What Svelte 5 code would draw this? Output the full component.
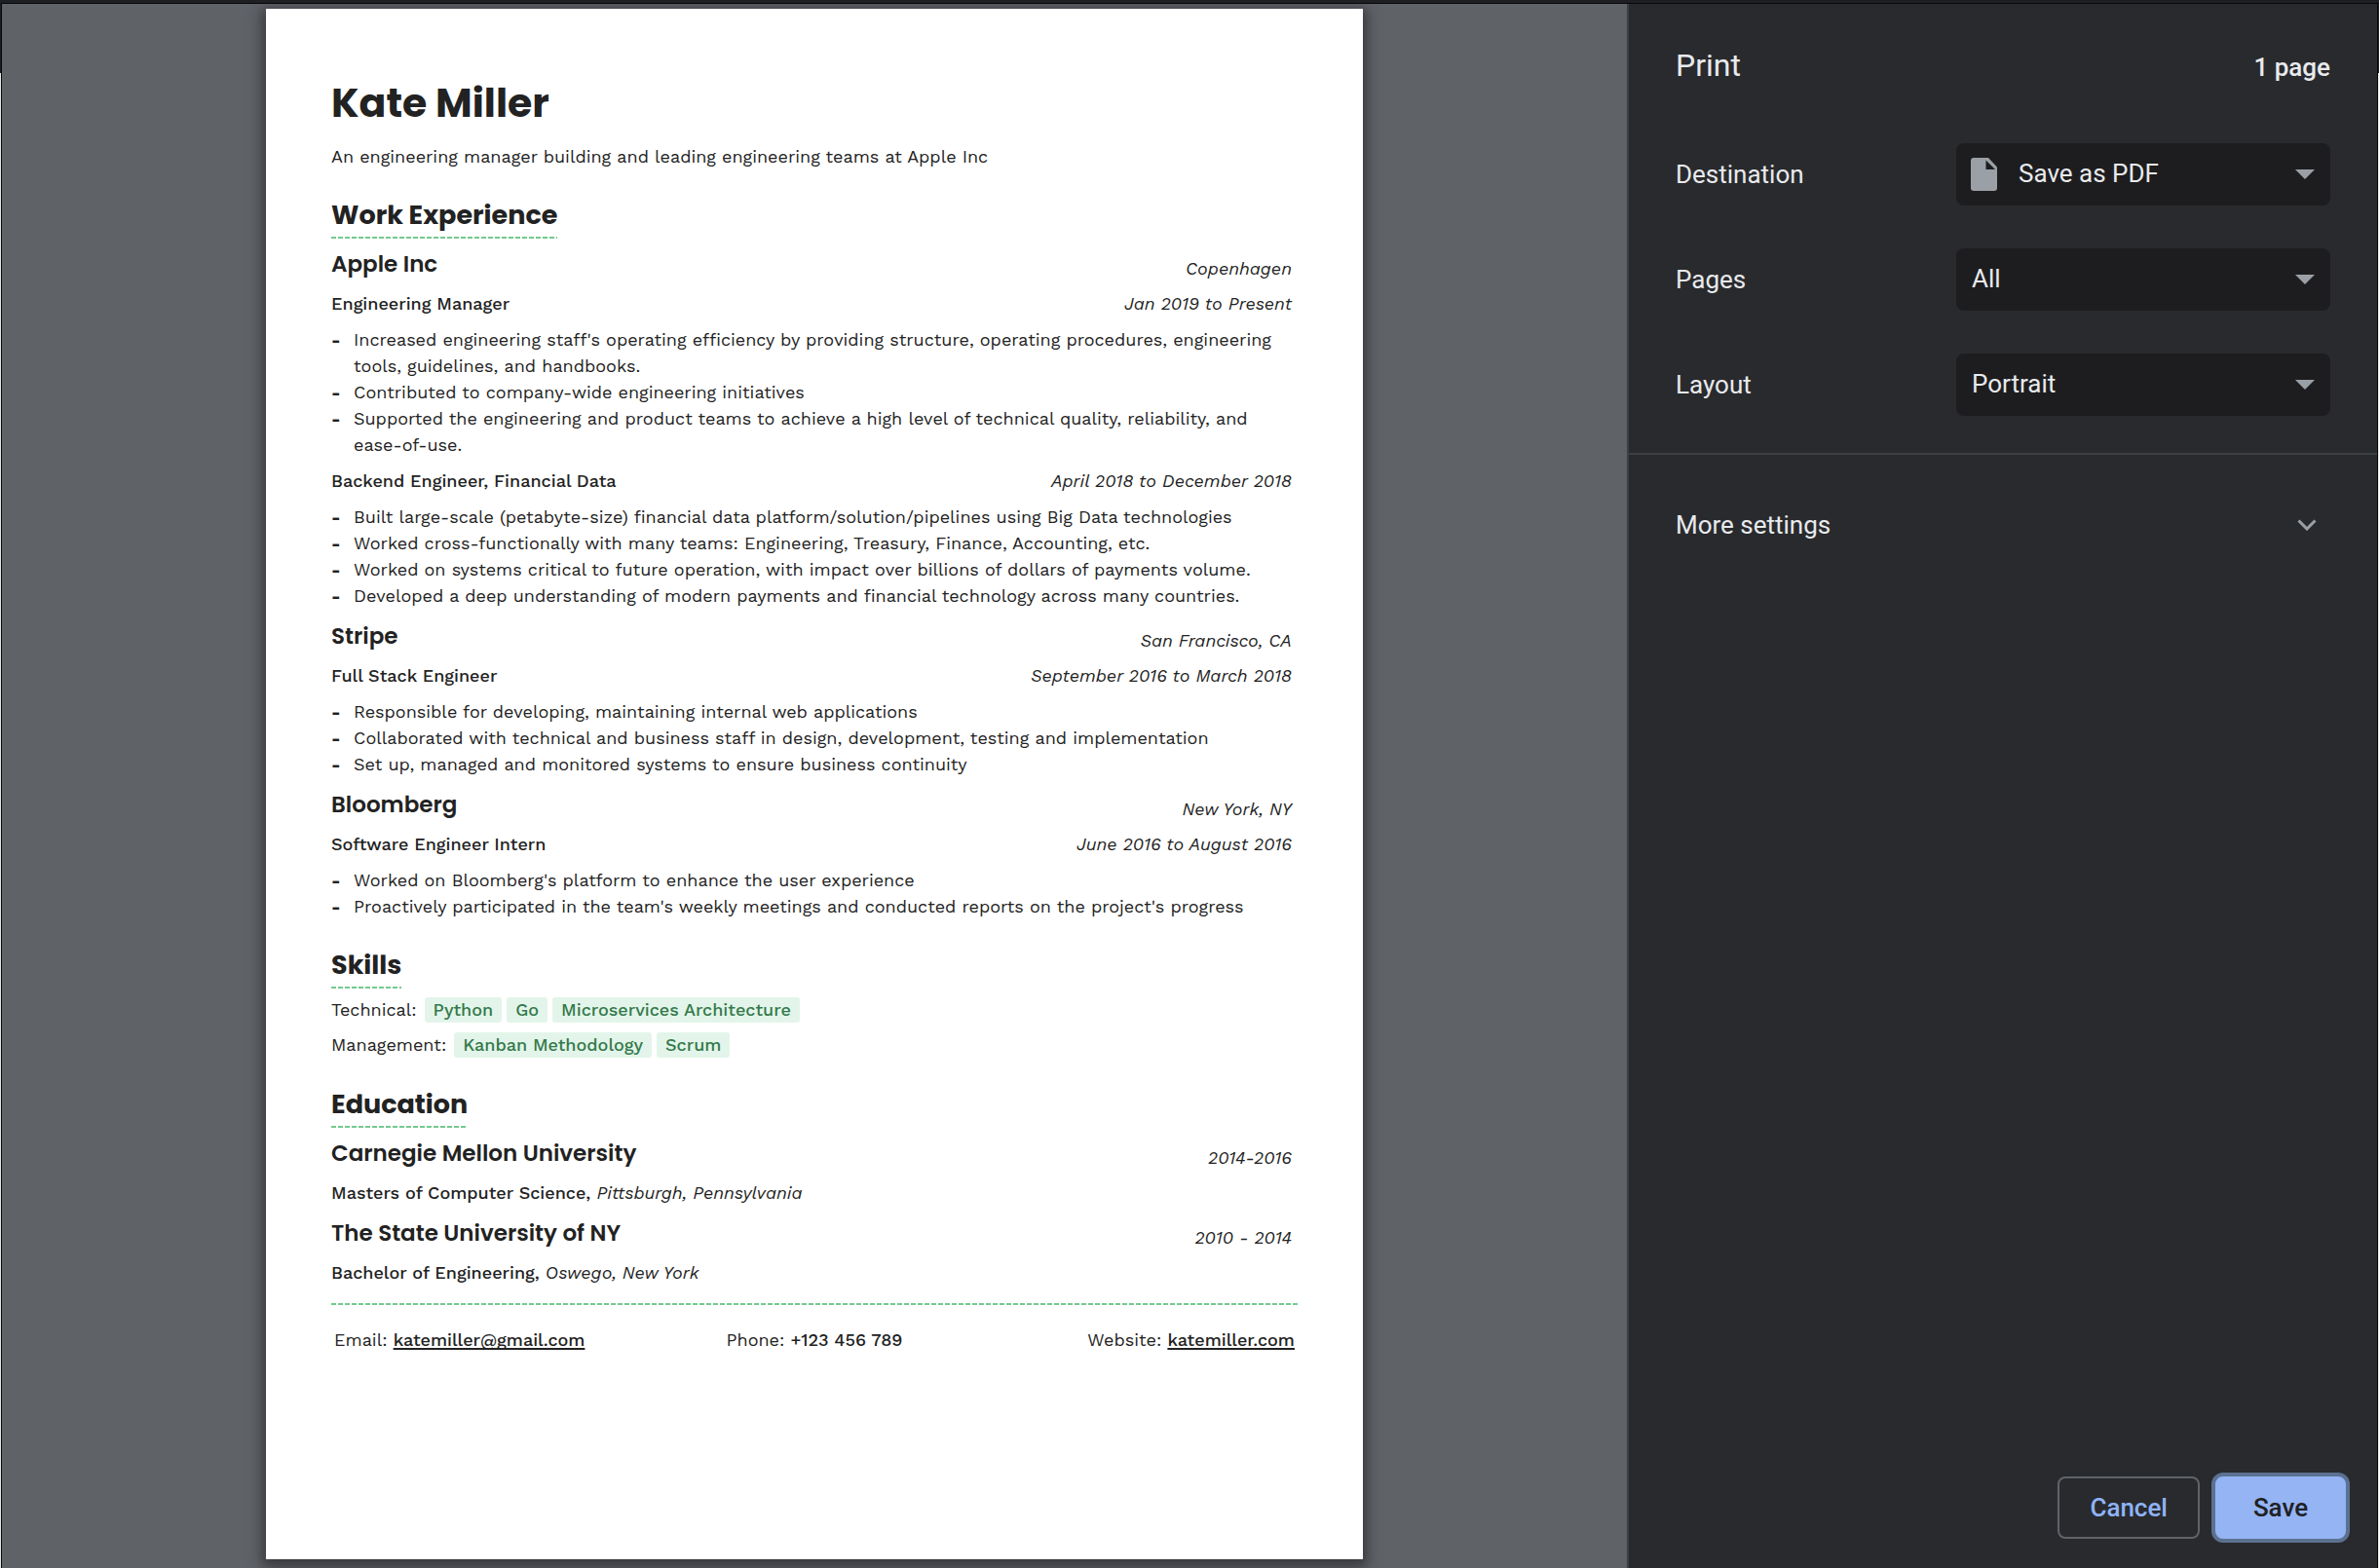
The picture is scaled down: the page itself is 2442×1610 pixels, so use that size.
<script>
  const jobs = [
    {
      company: 'Apple Inc',
      place: 'Copenhagen',
      roles: [
        {
          title: 'Engineering Manager',
          dates: 'Jan 2019 to Present',
          points: [
            "Increased engineering staff's operating efficiency by providing structure, operating procedures, engineering tools, guidelines, and handbooks.",
            'Contributed to company-wide engineering initiatives',
            'Supported the engineering and product teams to achieve a high level of technical quality, reliability, and ease-of-use.'
          ]
        },
        {
          title: 'Backend Engineer, Financial Data',
          dates: 'April 2018 to December 2018',
          points: [
            'Built large-scale (petabyte-size) financial data platform/solution/pipelines using Big Data technologies',
            'Worked cross-functionally with many teams: Engineering, Treasury, Finance, Accounting, etc.',
            'Worked on systems critical to future operation, with impact over billions of dollars of payments volume.',
            'Developed a deep understanding of modern payments and financial technology across many countries.'
          ]
        }
      ]
    },
    {
      company: 'Stripe',
      place: 'San Francisco, CA',
      roles: [
        {
          title: 'Full Stack Engineer',
          dates: 'September 2016 to March 2018',
          points: [
            'Responsible for developing, maintaining internal web applications',
            'Collaborated with technical and business staff in design, development, testing and implementation',
            'Set up, managed and monitored systems to ensure business continuity'
          ]
        }
      ]
    },
    {
      company: 'Bloomberg',
      place: 'New York, NY',
      roles: [
        {
          title: 'Software Engineer Intern',
          dates: 'June 2016 to August 2016',
          points: [
            "Worked on Bloomberg's platform to enhance the user experience",
            "Proactively participated in the team's weekly meetings and conducted reports on the project's progress"
          ]
        }
      ]
    }
  ];

  const skills = [
    { group: 'Technical', items: ['Python', 'Go', 'Microservices Architecture'] },
    { group: 'Management', items: ['Kanban Methodology', 'Scrum'] }
  ];

  const schools = [
    { name: 'Carnegie Mellon University', dates: '2014-2016', degree: 'Masters of Computer Science', place: 'Pittsburgh, Pennsylvania' },
    { name: 'The State University of NY', dates: '2010 - 2014', degree: 'Bachelor of Engineering', place: 'Oswego, New York' }
  ];

  const settings = [
    { id: 'destination', label: 'Destination', options: ['Save as PDF'], icon: true },
    { id: 'pages', label: 'Pages', options: ['All', 'Custom'] },
    { id: 'layout', label: 'Layout', options: ['Portrait', 'Landscape'] }
  ];
</script>

<div class="dialog">
  <main class="preview">
    <article class="sheet">
      <h1>Kate Miller</h1>
      <p class="tagline">An engineering manager building and leading engineering teams at Apple Inc</p>

      <section>
        <h2>Work Experience</h2>
        {#each jobs as job}
          <div class="row company">
            <h3>{job.company}</h3>
            <em>{job.place}</em>
          </div>
          {#each job.roles as role}
            <div class="row role">
              <h4>{role.title}</h4>
              <em>{role.dates}</em>
            </div>
            <ul>
              {#each role.points as point}
                <li>{point}</li>
              {/each}
            </ul>
          {/each}
        {/each}
      </section>

      <section>
        <h2>Skills</h2>
        <div class="skills">
          {#each skills as skill}
            <div class="skill">
              <span class="group">{skill.group}:</span>
              {#each skill.items as item}
                <span class="chip">{item}</span>
              {/each}
            </div>
          {/each}
        </div>
      </section>

      <section>
        <h2>Education</h2>
        {#each schools as school}
          <div class="row company">
            <h3>{school.name}</h3>
            <em>{school.dates}</em>
          </div>
          <p class="degree"><strong>{school.degree},</strong> <em>{school.place}</em></p>
        {/each}
      </section>

      <footer>
        <span>Email: <a href="mailto:katemiller@gmail.com">katemiller@gmail.com</a></span>
        <span>Phone: <strong>+123 456 789</strong></span>
        <span class="end">Website: <a href="#website">katemiller.com</a></span>
      </footer>
    </article>
  </main>

  <aside class="sidebar">
    <header>
      <h2>Print</h2>
      <span class="count">1 page</span>
    </header>

    <div class="settings">
      {#each settings as setting}
        <div class="setting">
          <label for={setting.id}>{setting.label}</label>
          <div class="field">
            {#if setting.icon}
              <svg class="file" viewBox="0 0 28 34" aria-hidden="true">
                <path d="M3 0H18L27 9.5V31a3 3 0 0 1-3 3H3a3 3 0 0 1-3-3V3a3 3 0 0 1 3-3Z" fill="#9aa0a6" />
                <path d="M15.500 2.500V12H25Z" fill="#1d1d1f" />
              </svg>
            {/if}
            <select id={setting.id} class:with-icon={setting.icon}>
              {#each setting.options as option}
                <option>{option}</option>
              {/each}
            </select>
            <svg class="arrow" viewBox="0 0 20 10" aria-hidden="true">
              <path d="M0 0H20L10 10Z" fill="#9aa0a6" />
            </svg>
          </div>
        </div>
      {/each}
    </div>

    <button class="more" type="button">
      <span>More settings</span>
      <svg viewBox="0 0 20 12" aria-hidden="true">
        <path d="M1.5 1.5 10 10 18.500 1.5" fill="none" stroke="#9aa0a6" stroke-width="3" />
      </svg>
    </button>

    <div class="actions">
      <button class="cancel" type="button">Cancel</button>
      <button class="save" type="button">Save</button>
    </div>
  </aside>
</div>

<style>
  :global(body) {
    margin: 0;
    background: linear-gradient(#1e1f23 75px, #e6e6e6 75px);
  }

  * {
    box-sizing: border-box;
  }

  h1, h2, h3, h4, p, ul {
    margin: 0;
    padding: 0;
  }

  /* 3px of the window behind stays visible above, 1px on each side */
  :global(#app) {
    display: flow-root;
  }

  .dialog {
    display: flex;
    min-height: calc(100vh - 3px);
    margin: 3px 1px 0;
    border: 1px solid #08080a;
    border-bottom: 0;
  }

  .preview {
    flex: 1;
    overflow: hidden;
    padding-top: 5px;
    background: #5f6267;
  }

  .sheet {
    width: 67.5%;
    aspect-ratio: 210 / 297;
    margin: 0 auto;
    padding: 67px 67px 0;
    background: #fff;
    box-shadow: 0 4px 12px 4px rgba(40, 38, 44, 0.7);
    color: #222;
    font: 18px/27px 'Work Sans', Inter, sans-serif;
    font-variant-numeric: lining-nums;
  }

  h1, .sheet h2, h3 {
    font-family: Poppins, Inter, sans-serif;
  }

  h1 {
    font-size: 41px;
    line-height: 60px;
    font-weight: 700;
  }

  .tagline {
    margin-top: 11px;
  }

  .sheet h2 {
    width: fit-content;
    margin-top: 26px;
    padding-bottom: 3px;
    background: repeating-linear-gradient(90deg, #74c98f 0 5px, transparent 5px 7px) bottom / 100% 2px no-repeat;
    font-size: 27px;
    line-height: 42px;
    font-weight: 700;
  }

  .row {
    display: flex;
    justify-content: space-between;
    padding-right: 6px;
  }

  .company {
    align-items: baseline;
    height: 33px;
    margin-top: 12px;
  }

  .company em {
    align-self: flex-end;
    line-height: 25px;
  }

  .sheet h2 + .company {
    margin-top: 10px;
  }

  h3 {
    font-size: 23px;
    line-height: 33px;
    font-weight: 600;
  }

  .role, .degree {
    margin-top: 10px;
  }

  h4, strong {
    font-size: 18px;
    font-weight: 500;
  }

  ul {
    margin-top: 10px;
    list-style: none;
  }

  li {
    position: relative;
    padding-left: 23px;
  }

  li::before {
    content: '-';
    position: absolute;
    left: 0;
    font-weight: 700;
  }

  .skills {
    display: grid;
    gap: 10px;
    margin: 9px 0 27px;
  }

  .skill {
    display: flex;
    gap: 5px;
    line-height: 26px;
  }

  .group {
    margin-right: 3px;
  }

  .chip {
    padding: 0 9px;
    border-radius: 3px;
    background: #e3f5ea;
    color: #34794a;
    font-weight: 500;
  }

  footer {
    display: grid;
    grid-template-columns: 1fr auto 1fr;
    margin-top: 18px;
    padding: 24px 3px 0;
    background: repeating-linear-gradient(90deg, #74c98f 0 5px, transparent 5px 7px) top / 100% 2px no-repeat;
  }

  .end {
    text-align: right;
  }

  footer a {
    color: inherit;
    font-weight: 500;
    text-decoration-thickness: 2px;
    text-underline-offset: 2px;
    text-decoration-skip-ink: none;
  }

  .sidebar {
    display: flex;
    flex-direction: column;
    flex: 0 0 770px;
    border-left: 2px solid #3c4043;
    background: #292a2d;
    color: #e8eaed;
    font: 26px/32px Roboto, sans-serif;
  }

  header {
    display: flex;
    align-items: baseline;
    justify-content: space-between;
    padding: 43px 48px 0;
  }

  header h2 {
    font-size: 32px;
    line-height: 40px;
    font-weight: 400;
  }

  .count {
    font-weight: 500;
  }

  .settings {
    display: grid;
    gap: 44px;
    padding: 60px 48px 38px;
    border-bottom: 2px solid #3c4043;
  }

  .setting {
    display: flex;
    align-items: center;
    justify-content: space-between;
  }

  .field {
    position: relative;
    width: 384px;
  }

  select {
    display: block;
    width: 100%;
    height: 64px;
    padding: 0 48px 2px 16px;
    border: 0;
    border-radius: 8px;
    appearance: none;
    background: #1d1d1f;
    color: inherit;
    font: inherit;
  }

  .with-icon {
    padding-left: 64px;
  }

  .file {
    position: absolute;
    top: 15px;
    left: 15px;
    width: 28px;
    height: 34px;
  }

  .arrow {
    position: absolute;
    top: 27px;
    right: 16px;
    width: 20px;
    height: 10px;
    pointer-events: none;
  }

  .more {
    display: flex;
    align-items: center;
    justify-content: space-between;
    padding: 56px 62px 0 48px;
    border: 0;
    background: none;
    color: inherit;
    font: inherit;
  }

  .more svg {
    width: 20px;
    height: 12px;
  }

  .actions {
    display: flex;
    gap: 16px;
    justify-content: flex-end;
    margin-top: auto;
    padding: 0 32px 30px;
  }

  .actions button {
    min-width: 134px;
    height: 64px;
    padding: 0 31px;
    border: 2px solid #5f6368;
    border-radius: 8px;
    background: none;
    color: #8fb3f5;
    font: 500 26px/32px Roboto, sans-serif;
  }

  .actions .save {
    border-color: #94b4f4;
    background: #94b4f4;
    box-shadow: 0 0 0 4px #5c7192;
    color: #202124;
  }
</style>
